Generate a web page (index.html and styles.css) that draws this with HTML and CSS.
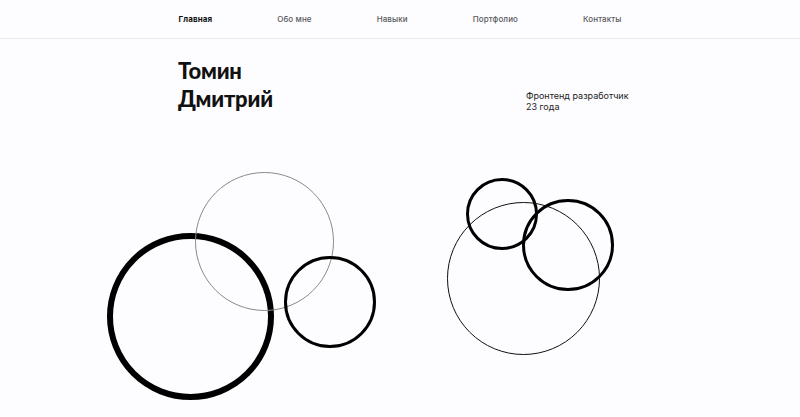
FILE: index.html
```html
<!DOCTYPE html>
<html lang="ru">
<head>
<meta charset="utf-8">
<title>Томин Дмитрий</title>
<link rel="stylesheet" href="styles.css">
</head>
<body>
<header class="topbar">
  <nav class="nav">
    <a class="nav-link active" href="#">Главная</a>
    <a class="nav-link" href="#">Обо мне</a>
    <a class="nav-link" href="#">Навыки</a>
    <a class="nav-link" href="#">Портфолио</a>
    <a class="nav-link" href="#">Контакты</a>
  </nav>
</header>
<main class="hero">
  <div class="intro">
    <h1 class="name">Томин<br>Дмитрий</h1>
    <div class="role">Фронтенд разработчик<br>23 года</div>
  </div>
  <div class="canvas">
    <span class="circle c1"></span>
    <span class="circle c2"></span>
    <span class="circle c3"></span>
    <span class="circle c4"></span>
    <span class="circle c5"></span>
    <span class="circle c6"></span>
  </div>
</main>
</body>
</html>
```
FILE: styles.css
```css
* { box-sizing: border-box; }
html, body { margin: 0; padding: 0; }
body {
  background: #fdfcfe;
  font-family: "Inter", "Noto Sans", sans-serif;
  color: #111;
  width: 800px;
  height: 417px;
  overflow: hidden;
}
.topbar {
  height: 39px;
  border-bottom: 1px solid #e9e8ee;
  display: flex;
  justify-content: center;
}
.nav {
  width: 443px;
  display: flex;
  justify-content: space-between;
  align-items: center;
}
.nav-link {
  font-size: 8px;
  font-weight: 500;
  color: #5a5a60;
  text-decoration: none;
  letter-spacing: 0.1px;
}
.nav-link.active {
  color: #111;
  font-weight: 700;
}
.hero {
  position: relative;
  height: 378px;
}
.intro {
  display: flex;
  padding-left: 178px;
  padding-top: 18px;
}
.name {
  margin: 0;
  font-family: "Lato", "Inter", sans-serif;
  font-size: 22px;
  line-height: 28px;
  font-weight: 900;
  color: #111;
  width: 348px;
  letter-spacing: -0.2px;
}
.role {
  margin-top: 33px;
  font-size: 9px;
  line-height: 11px;
  color: #222;
}
.canvas {
  position: absolute;
  inset: 0;
}
.circle {
  position: absolute;
  border-radius: 50%;
  border-style: solid;
}
.c1 { left: 107px; top: 194px; width: 167px; height: 167px; border-width: 6px; border-color: #000; }
.c2 { left: 195px; top: 133px; width: 139px; height: 139px; border-width: 1px; border-color: #8a8a8a; }
.c3 { left: 284px; top: 217px; width: 92px; height: 92px; border-width: 3px; border-color: #000; }
.c4 { left: 466px; top: 139px; width: 72px; height: 72px; border-width: 3px; border-color: #000; }
.c5 { left: 447px; top: 163px; width: 153px; height: 153px; border-width: 1.5px; border-color: #111; }
.c6 { left: 522px; top: 160px; width: 92px; height: 92px; border-width: 3.5px; border-color: #000; }
```
